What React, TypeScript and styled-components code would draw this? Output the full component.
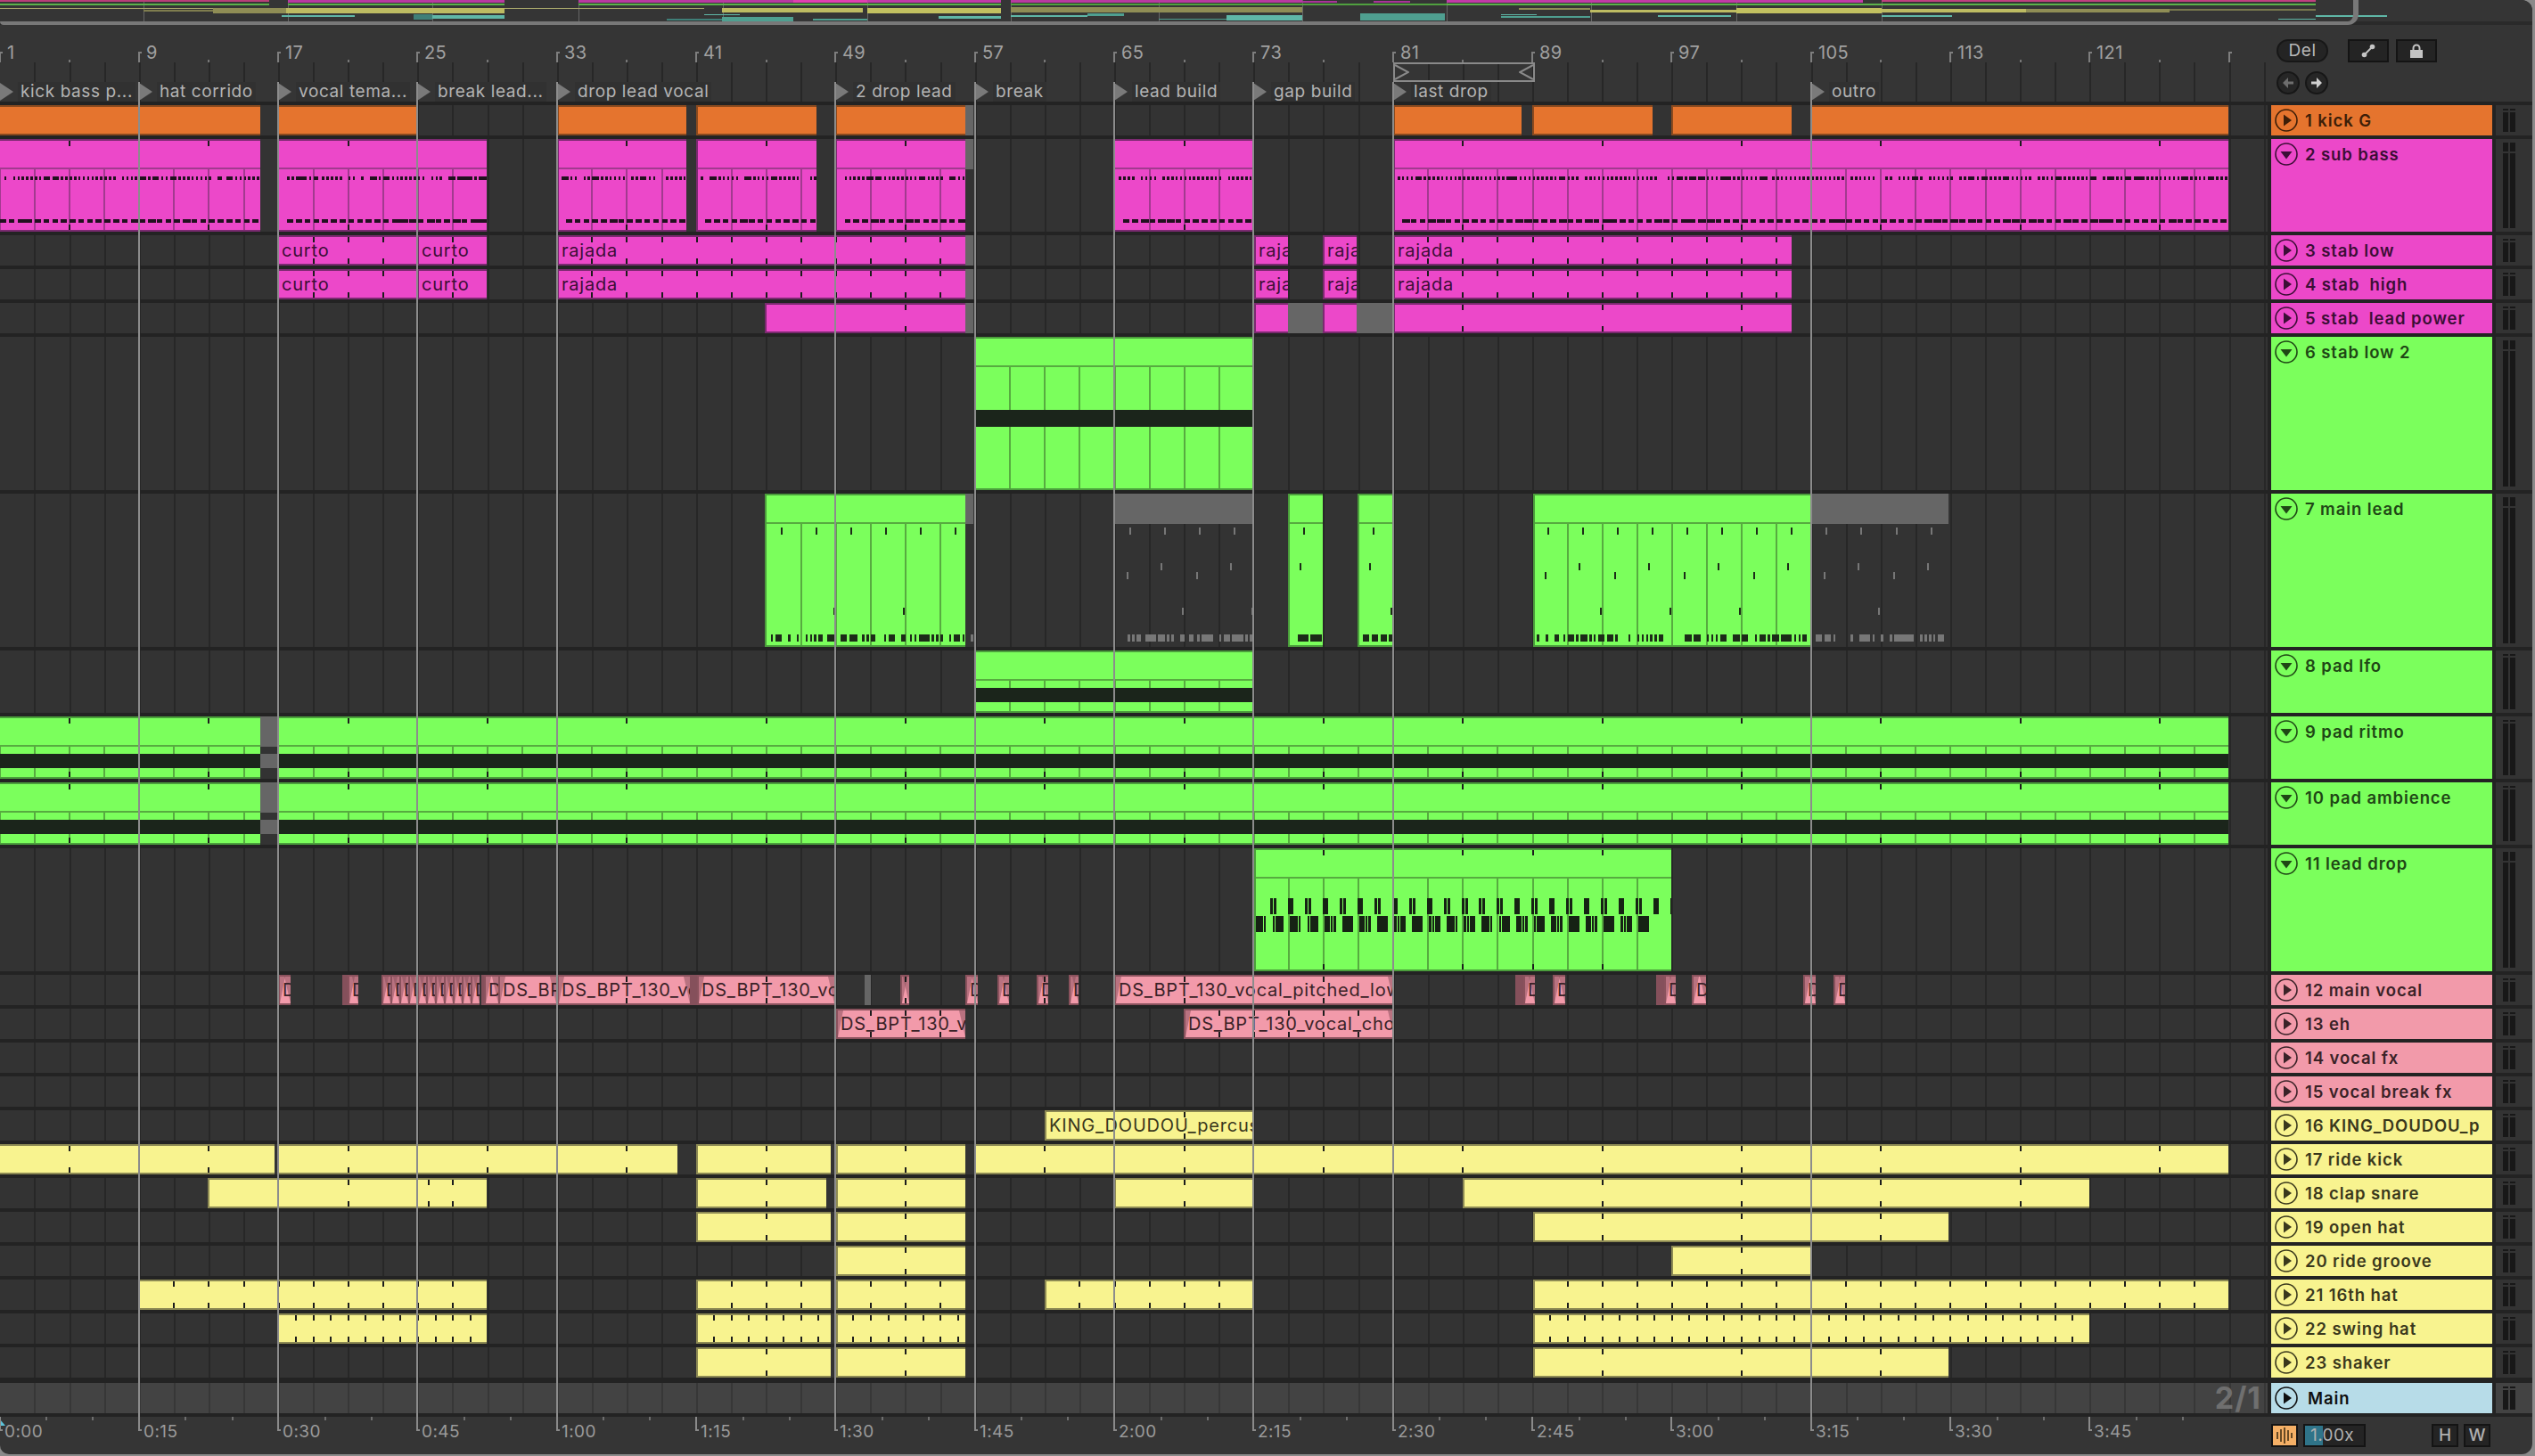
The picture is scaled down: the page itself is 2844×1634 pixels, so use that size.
import React from 'react';
import styled, { createGlobalStyle } from 'styled-components';

type Tone = 'orange' | 'pink' | 'green' | 'salmon' | 'salmonDim' | 'yellow' | 'blue' | 'off';
type ClipKind = 'plain' | 'strip' | 'ghost';

const TONES: Record<Tone, { fill: string; edge: string; line: string; ink: string }> = {
    orange: { fill: '#e5742e', edge: '#8a4a1f', line: '#a8561f', ink: '#3d1e08' },
    pink: { fill: '#ec48c9', edge: '#7b2a70', line: '#a23a8f', ink: '#3c0e36' },
    green: { fill: '#7bff5c', edge: '#4b9e3c', line: '#57ab40', ink: '#1f4715' },
    salmon: { fill: '#f29aaa', edge: '#8a525d', line: '#8a525d', ink: '#3a2227' },
    salmonDim: { fill: '#85505b', edge: '#85505b', line: '#85505b', ink: '#3a2227' },
    yellow: { fill: '#f8f38f', edge: '#8d8a54', line: '#8d8a54', ink: '#3a381c' },
    blue: { fill: '#b7dce8', edge: '#b7dce8', line: '#b7dce8', ink: '#101010' },
    off: { fill: '#666666', edge: '#666666', line: '#666666', ink: '#222222' },
};

const BAR = 19.54;
const barX = (b: number) => -1 + (b - 1) * BAR;
const lineX = (b: number) => Math.round(barX(b) - 0.5);
const rnd = (i: number) => {
    const v = Math.sin(i * 12.9898) * 43758.5453;
    return v - Math.floor(v);
};

const gridBackground = (base: string, line: string) => {
    const stops: string[] = [];
    let last = 0;
    for (let k = 1; k <= 65; k++) {
        const x = Math.round(-0.6 + 39.08 * k);
        stops.push(`${base} ${last}px ${x}px`, `${line} ${x}px ${x + 2}px`);
        last = x + 2;
    }
    stops.push(`${base} ${last}px 100%`);
    return `linear-gradient(to right, ${stops.join(', ')})`;
};

const LANE_GRID = gridBackground('#333333', '#272727');
const MAIN_GRID = gridBackground('#434343', '#373737');
const RULER_GRID = gridBackground('#353535', '#272727');

interface ClipData {
    from: number;
    to: number;
    label?: string;
    tone?: Tone;
    marks?: number[];
}

interface TrackData {
    name: string;
    tone: Tone;
    height: number;
    open?: boolean;
    kind?: ClipKind;
    band?: [number, number];
    notes?: 'sub' | 'lead' | 'drop';
    tick?: [number, number];
    fade?: boolean;
    clips: ClipData[];
}

const thinVocals: ClipData[] = Array.from({ length: 11 }, (_, i) => ({ from: 428 + i * 10, to: 438 + i * 10, label: 'D' }));

const spans = (list: number[][]): ClipData[] => list.map(([from, to]) => ({ from, to }));
const named = (label: string, list: number[][]): ClipData[] => list.map(([from, to]) => ({ from, to, label }));
const gap57 = { from: 1083, to: 1092, tone: 'off' as Tone };

const TRACKS: TrackData[] = [
    { name: '1 kick G', tone: 'orange', height: 34, clips: [...spans([[-4, 292], [311, 468], [625, 770], [781, 916], [937, 1083], [1563, 1707], [1719, 1854], [1875, 2010], [2031, 2500]]), gap57] },
    { name: '2 sub bass', tone: 'pink', height: 104, open: true, kind: 'strip', notes: 'sub', tick: [5, 8], clips: [...spans([[-4, 292], [311, 546], [625, 770], [781, 916], [937, 1083], [1249, 1407], [1563, 2500]]), gap57] },
    { name: '3 stab low', tone: 'pink', height: 34, tick: [1, 2], clips: [...named('curto', [[311, 468], [468, 546]]), ...named('rajada', [[625, 1083]]), ...named('raja', [[1407, 1445], [1484, 1522]]), ...named('rajada', [[1563, 2010]]), gap57] },
    { name: '4 stab  high', tone: 'pink', height: 34, tick: [1, 2], clips: [...named('curto', [[311, 468], [468, 546]]), ...named('rajada', [[625, 1083]]), ...named('raja', [[1407, 1445], [1484, 1522]]), ...named('rajada', [[1563, 2010]]), gap57] },
    { name: '5 stab  lead power', tone: 'pink', height: 34, tick: [5, 8], clips: [...spans([[858, 1083], [1407, 1445], [1484, 1522], [1563, 2010]]), gap57, { from: 1445, to: 1484, tone: 'off' }, { from: 1522, to: 1563, tone: 'off' }] },
    { name: '6 stab low 2', tone: 'green', height: 172, open: true, kind: 'strip', band: [82, 101], clips: spans([[1093, 1407]]) },
    { name: '7 main lead', tone: 'green', height: 172, open: true, kind: 'strip', notes: 'lead', clips: [...spans([[858, 1083], [1445, 1484], [1523, 1563], [1720, 2031]]), { from: 1083, to: 1092, tone: 'off' }, { from: 1250, to: 1407, tone: 'off' }, { from: 2031, to: 2186, tone: 'off' }] },
    { name: '8 pad lfo', tone: 'green', height: 70, open: true, kind: 'strip', band: [42, 58], clips: spans([[1093, 1407]]) },
    { name: '9 pad ritmo', tone: 'green', height: 70, open: true, kind: 'strip', band: [42, 58], tick: [5, 8], clips: [...spans([[-4, 292], [311, 2500]]), { from: 292, to: 311, tone: 'off' }] },
    { name: '10 pad ambience', tone: 'green', height: 70, open: true, kind: 'strip', band: [42, 58], tick: [5, 8], clips: [...spans([[-4, 292], [311, 2500]]), { from: 292, to: 311, tone: 'off' }] },
    { name: '11 lead drop', tone: 'green', height: 138, open: true, kind: 'strip', notes: 'drop', tick: [1, 4], clips: spans([[1407, 1875]]) },
    {
        name: '12 main vocal', tone: 'salmon', height: 34, fade: true, tick: [5, 8], clips: [
            { from: 312, to: 326, label: 'D' },
            { from: 384, to: 390, tone: 'salmonDim' }, { from: 390, to: 402, label: 'D' },
            ...thinVocals,
            { from: 540, to: 543, tone: 'salmonDim' }, { from: 543, to: 559, label: 'D' },
            { from: 559, to: 624, label: 'DS_BPT_130_vocal' }, { from: 625, to: 774, label: 'DS_BPT_130_vocal' },
            { from: 774, to: 782, tone: 'salmonDim' }, { from: 782, to: 936, label: 'DS_BPT_130_vocal' },
            { from: 970, to: 977, tone: 'off' }, { from: 1010, to: 1020 },
            { from: 1083, to: 1097, label: 'D' }, { from: 1119, to: 1132, label: 'D' }, { from: 1163, to: 1176, label: 'D' }, { from: 1199, to: 1210, label: 'D' },
            { from: 1250, to: 1564, label: 'DS_BPT_130_vocal_pitched_low' },
            { from: 1700, to: 1709, tone: 'salmonDim' }, { from: 1709, to: 1722, label: 'D' },
            { from: 1742, to: 1756, label: 'D' },
            { from: 1858, to: 1867, tone: 'salmonDim' }, { from: 1867, to: 1880, label: 'D' },
            { from: 1898, to: 1914, label: 'D' }, { from: 2023, to: 2037, label: 'D' }, { from: 2057, to: 2070, label: 'D' },
        ],
    },
    { name: '13 eh', tone: 'salmon', height: 34, fade: true, tick: [1, 2], clips: [{ from: 938, to: 1083, label: 'DS_BPT_130_vocal' }, { from: 1328, to: 1564, label: 'DS_BPT_130_vocal_chop' }] },
    { name: '14 vocal fx', tone: 'salmon', height: 34, clips: [] },
    { name: '15 vocal break fx', tone: 'salmon', height: 34, clips: [] },
    { name: '16 KING_DOUDOU_p', tone: 'yellow', height: 34, tick: [5, 8], clips: [{ from: 1172, to: 1407, label: 'KING_DOUDOU_percussion' }] },
    { name: '17 ride kick', tone: 'yellow', height: 34, tick: [5, 8], clips: spans([[-4, 308], [311, 760], [781, 932], [938, 1083], [1093, 2500]]) },
    { name: '18 clap snare', tone: 'yellow', height: 34, tick: [5, 8], clips: [{ from: 233, to: 546, marks: [480, 507] }, ...spans([[781, 927], [938, 1083], [1250, 1407], [1641, 2344]])] },
    { name: '19 open hat', tone: 'yellow', height: 34, tick: [5, 8], clips: spans([[781, 932], [938, 1083], [1720, 2186]]) },
    { name: '20 ride groove', tone: 'yellow', height: 34, tick: [5, 8], clips: spans([[938, 1083], [1875, 2031]]) },
    { name: '21 16th hat', tone: 'yellow', height: 34, tick: [1, 2], clips: spans([[155, 546], [781, 932], [938, 1083], [1172, 1407], [1720, 2500]]) },
    { name: '22 swing hat', tone: 'yellow', height: 34, tick: [1, 1], clips: spans([[311, 546], [781, 932], [938, 1083], [1720, 2344]]) },
    { name: '23 shaker', tone: 'yellow', height: 34, tick: [5, 8], clips: spans([[781, 932], [938, 1083], [1720, 2186]]) },
];

const LOCATORS: [number, string][] = [
    [1, 'kick bass p...'], [9, 'hat corrido'], [17, 'vocal tema...'], [25, 'break lead...'], [33, 'drop lead vocal'],
    [49, '2 drop lead'], [57, 'break'], [65, 'lead build'], [73, 'gap build'], [81, 'last drop'], [105, 'outro'],
];

const OVERVIEW: [number, number, number, number, string][] = [
    [0, 302, 0, 2, '#b83f78'], [0, 302, 4, 6, '#5bb24a'], [0, 790, 9, 10, '#a9a76b'],
    [161, 323, 11, 13, '#7f7d4f'], [239, 323, 9, 15, '#8f8d55'], [321, 566, 9, 15, '#bdbb62'],
    [316, 398, 17, 19, '#5fb7a7'], [464, 485, 16, 22, '#3f7f78'], [485, 566, 17, 21, '#5fb7a7'],
    [323, 566, 0, 3, '#b83aa0'], [323, 566, 4, 6, '#5bb24a'],
    [649, 890, 0, 3, '#b83aa0'], [890, 973, 0, 3, '#e040b0'], [973, 1123, 0, 3, '#c13ba6'],
    [649, 1123, 4, 6, '#5bb24a'], [810, 968, 9, 14, '#bdbb62'], [973, 1123, 9, 15, '#c2c060'],
    [790, 830, 16, 17, '#5fb7a7'], [748, 810, 21, 23, '#3f7f78'], [810, 890, 19, 24, '#4f9f90'], [912, 973, 21, 23, '#4f9f90'],
    [1053, 1123, 18, 21, '#5fb7a7'], [1134, 1461, 0, 3, '#b83aa0'], [1134, 1623, 4, 6, '#4fa03f'],
    [1134, 1461, 8, 14, '#8f8d55'], [1134, 1220, 17, 19, '#5fb7a7'], [1220, 1261, 15, 18, '#4f9f90'],
    [1376, 1461, 17, 23, '#5fb7a7'], [1300, 1376, 21, 22, '#4f9f90'], [1461, 1500, 1, 3, '#a93399'], [1541, 1582, 1, 3, '#a93399'],
    [1526, 1621, 15, 23, '#4f9f90'], [1623, 2090, 0, 3, '#c13ba6'], [2111, 2598, 0, 2, '#c04080'], [1623, 2598, 4, 6, '#5bb24a'],
    [1704, 1784, 9, 11, '#8f8d55'], [1784, 1948, 11, 14, '#bdbb62'], [1948, 2111, 9, 15, '#c2c060'], [2111, 2273, 10, 14, '#bdbb62'],
    [2273, 2434, 10, 14, '#8f8d55'], [2434, 2598, 10, 12, '#77764d'],
    [1684, 1724, 16, 17, '#5fb7a7'], [1684, 1784, 18, 20, '#4f9f90'], [1860, 1942, 17, 19, '#5fb7a7'], [2111, 2190, 17, 19, '#5fb7a7'],
    [2598, 2678, 17, 19, '#5fb7a7'], [2556, 2598, 21, 22, '#5fb7a7'],
];

const GlobalStyle = createGlobalStyle`
    html, body {
        margin: 0;
        background: #8a8a8a;
        overflow: hidden;
    }
    * {
        box-sizing: border-box;
    }
`;

const Page = styled.div`
    width: 2844px;
    height: 1634px;
    padding: 0 3px 2px 0;
    background: #8a8a8a;
    font-family: Inter, "Liberation Sans", sans-serif;
`;

const Panel = styled.div`
    position: relative;
    width: 100%;
    height: 100%;
    display: flex;
    flex-direction: column;
    background: #353535;
    border-radius: 0 12px 12px 10px;
    overflow: hidden;
`;

const Overview = styled.div`
    position: relative;
    height: 28px;
    flex: none;
    background: #353535;
    border-bottom: 4px solid #2a2a2a;
`;

const OverviewStrip = styled.svg`
    display: block;
`;

const OverviewThumb = styled.div`
    position: absolute;
    left: 0;
    top: -12px;
    width: 2646px;
    height: 40px;
    border: solid #787878;
    border-width: 0 6px 4px 0;
    border-radius: 0 0 12px 4px;
`;

const TopBar = styled.div`
    display: grid;
    grid-template-columns: 2544px 1fr;
    height: 86px;
    flex: none;
`;

const Ruler = styled.div`
    display: flex;
    flex-direction: column;
    overflow: hidden;
`;

const BarRow = styled.div`
    position: relative;
    height: 42px;
    flex: none;
`;

const BarMark = styled.div.attrs<{ $left: number }>(p => ({ style: { left: p.$left } }))`
    position: absolute;
    bottom: 0;
    height: 12px;
    width: 4px;
    border-left: 2px solid #7e7e7e;
    border-top: 2px solid #7e7e7e;
`;

const BarNumber = styled.span.attrs<{ $left: number }>(p => ({ style: { left: p.$left } }))`
    position: absolute;
    top: 20px;
    font-size: 20px;
    line-height: 22px;
    letter-spacing: 0.4px;
    color: #a0a0a0;
`;

const BeatDot = styled.div.attrs<{ $left: number }>(p => ({ style: { left: p.$left } }))`
    position: absolute;
    bottom: 0;
    width: 2px;
    height: 3px;
    background: #777;
`;

const BeatRow = styled.div`
    height: 22px;
    flex: none;
    background: ${RULER_GRID};
`;

const LocatorRow = styled.div`
    position: relative;
    height: 22px;
    flex: none;
    background: ${RULER_GRID};
`;

const Locator = styled.div.attrs<{ $left: number }>(p => ({ style: { left: p.$left } }))`
    position: absolute;
    top: 0;
    height: 22px;
    display: flex;
    align-items: center;
    gap: 5px;
`;

const LocatorFlag = styled.span`
    flex: none;
    width: 0;
    height: 0;
    margin-left: 1px;
    border-top: 10px solid transparent;
    border-bottom: 10px solid transparent;
    border-left: 15px solid #7a7a7a;
`;

const LocatorName = styled.span`
    font-size: 19px;
    line-height: 22px;
    padding: 0 3px;
    letter-spacing: 0.6px;
    color: #b4b4b4;
    background: #313131;
    white-space: nowrap;
`;

const LoopBrace = styled.div`
    position: absolute;
    left: 1563px;
    top: 70px;
    width: 159px;
    height: 22px;
    border: 2px solid #8a8a8a;
    display: flex;
    align-items: center;
    justify-content: space-between;
`;

const BraceArrow = styled.svg`
    display: block;
`;

const TopControls = styled.div`
    display: grid;
    grid-template-columns: 58px 46px 46px;
    grid-auto-rows: 26px;
    column-gap: 8px;
    row-gap: 10px;
    padding: 16px 0 0 10px;
`;

const DelPill = styled.div`
    height: 26px;
    border-radius: 13px;
    border: 2px solid #171717;
    background: #242424;
    color: #b8b8b8;
    font-size: 19px;
    letter-spacing: 0.6px;
    line-height: 22px;
    text-align: center;
`;

const SquareButton = styled.div`
    height: 26px;
    margin-left: 14px;
    margin-right: -14px;
    display: flex;
    align-items: center;
    justify-content: center;
    background: #242424;
    border: 2px solid #141414;
`;

const NavPair = styled.div`
    display: flex;
    gap: 6px;
    grid-column: 1;
`;

const RoundButton = styled.div`
    width: 26px;
    height: 26px;
    display: flex;
    align-items: center;
    justify-content: center;
    border-radius: 50%;
    border: 2px solid #171717;
    background: #262626;
`;

const TrackList = styled.div`
    flex: none;
    height: 1476px;
    display: flex;
    flex-direction: column;
    gap: 4px;
    padding: 4px 0;
    background: #232323;
`;

const TrackRow = styled.div<{ $height: number; $main?: boolean }>`
    display: grid;
    grid-template-columns: 2544px 248px 1fr;
    column-gap: 4px;
    height: ${p => p.$height}px;
    flex: none;
    margin-top: ${p => (p.$main ? '2px' : '0')};
`;

const Lane = styled.div<{ $main?: boolean }>`
    position: relative;
    background: ${p => (p.$main ? MAIN_GRID : LANE_GRID)};
    overflow: hidden;
`;

const Clip = styled.div.attrs<{ $left: number; $width: number }>(p => ({ style: { left: p.$left, width: p.$width } }))<{ $tone: Tone; $ghost?: boolean }>`
    position: absolute;
    top: 0;
    bottom: 0;
    overflow: hidden;
    background: ${p => (p.$ghost ? 'transparent' : TONES[p.$tone].fill)};
    border: solid ${p => (p.$ghost ? 'transparent' : TONES[p.$tone].edge)};
    border-width: ${p => (p.$ghost ? '0' : '2px 0 2px 2px')};
`;

const ClipArt = styled.svg`
    position: absolute;
    left: -2px;
    top: -2px;
    display: block;
`;

const GhostArt = styled(ClipArt)`
    left: 0;
    top: 0;
`;

const ClipLabel = styled.span<{ $tone: Tone }>`
    position: relative;
    display: block;
    padding-left: 3px;
    font-size: 20px;
    letter-spacing: 0.8px;
    line-height: 30px;
    white-space: nowrap;
    color: ${p => TONES[p.$tone].ink};
`;

const TrackHead = styled.div<{ $tone: Tone; $main?: boolean }>`
    display: flex;
    align-items: flex-start;
    gap: ${p => (p.$main ? '11px' : '8px')};
    padding: 4px 0 0 4px;
    overflow: hidden;
    background: ${p => TONES[p.$tone].fill};
    color: ${p => TONES[p.$tone].ink};
    font-size: 18.5px;
    letter-spacing: 0.9px;
    font-weight: 600;
    line-height: 26px;
    white-space: pre;
`;

const HeadIcon = styled.svg`
    flex: none;
    display: block;
`;

const Mixer = styled.div<{ $main?: boolean }>`
    display: flex;
    gap: 2px;
    padding: 4px 0 4px 8px;
    background: ${p => (p.$main ? '#434343' : '#333333')};
`;

const MeterChannel = styled.div<{ $tall: boolean }>`
    width: 6px;
    display: flex;
    flex-direction: column;
    gap: 2px;
    &::before {
        content: '';
        height: ${p => (p.$tall ? '10px' : '2px')};
        flex: none;
        background: #181818;
    }
    &::after {
        content: '';
        flex: 1;
        background: #181818;
    }
`;

const SignatureBadge = styled.span`
    position: absolute;
    right: 7px;
    top: 0;
    font-size: 34px;
    font-weight: 700;
    letter-spacing: 1px;
    line-height: 34px;
    color: #6f6f6f;
`;

const BottomBar = styled.div`
    flex: 1;
    display: grid;
    grid-template-columns: 2544px 1fr;
    column-gap: 4px;
`;

const TimeRuler = styled.div`
    position: relative;
    overflow: hidden;
`;

const TimeTick = styled.div.attrs<{ $left: number }>(p => ({ style: { left: p.$left } }))`
    position: absolute;
    top: 0;
    width: 4px;
    height: 16px;
    border-left: 2px solid #8a8a8a;
    border-bottom: 2px solid #8a8a8a;
`;

const TimeDot = styled.div.attrs<{ $left: number }>(p => ({ style: { left: p.$left } }))`
    position: absolute;
    top: 0;
    width: 2px;
    height: 4px;
    background: #6e6e6e;
`;

const TimeLabel = styled.span.attrs<{ $left: number }>(p => ({ style: { left: p.$left } }))`
    position: absolute;
    top: 6px;
    font-size: 19px;
    letter-spacing: 0.4px;
    line-height: 22px;
    color: #9a9a9a;
`;

const Playhead = styled.div`
    position: absolute;
    left: 0;
    top: 3px;
    width: 0;
    height: 0;
    border-bottom: 7px solid #5cc4dc;
    border-right: 6px solid transparent;
`;

const BottomControls = styled.div`
    display: flex;
    align-items: flex-start;
    padding-top: 8px;
`;

const MonitorButton = styled.div`
    width: 30px;
    height: 26px;
    display: flex;
    align-items: center;
    justify-content: center;
    background: #f5b066;
    border: 2px solid #141414;
`;

const SpeedBox = styled.div`
    position: relative;
    width: 70px;
    height: 26px;
    margin-left: 6px;
    background: #242424;
    border: 2px solid #141414;
    color: #b0b0b0;
    font-size: 19px;
    letter-spacing: 0.4px;
    line-height: 22px;
    padding-left: 6px;
    &::before {
        content: '';
        position: absolute;
        left: 0;
        top: 0;
        bottom: 0;
        width: 20px;
        background: #2f7489;
    }
`;

const SpeedText = styled.span`
    position: relative;
`;

const LetterButton = styled.div<{ $gap: number }>`
    width: 30px;
    height: 26px;
    margin-left: ${p => p.$gap}px;
    text-align: center;
    background: #242424;
    border: 2px solid #141414;
    color: #b0b0b0;
    font-size: 19px;
    font-weight: 500;
    line-height: 22px;
`;

const LocatorLine = styled.div.attrs<{ $left: number }>(p => ({ style: { left: p.$left } }))`
    position: absolute;
    top: 92px;
    height: 1498px;
    width: 2px;
    background: #8c8c8c;
`;

function Meter({ tall }: { tall: boolean }) {
    return <Mixer>
        <MeterChannel $tall={tall}></MeterChannel>
        <MeterChannel $tall={tall}></MeterChannel>
    </Mixer>
}

function ticksFor(left: number, width: number, tick?: [number, number], marks?: number[]) {
    const out: number[] = (marks || []).map(x => x - left);
    if (!tick) return out;
    for (let b = tick[0]; b < 140; b += tick[1]) {
        const x = Math.round(barX(b) - left);
        if (x > 4 && x < width - 4) out.push(x);
    }
    return out;
}

function subNotes(left: number, width: number) {
    const rects: React.ReactNode[] = [];
    for (let i = Math.floor(left / 4.885); i * 4.885 < left + width; i++) {
        const x = i * 4.885 - left;
        if (x < 3 || rnd(i) < 0.12) continue;
        rects.push(<rect key={`s${i}`} x={x} y={42} width={rnd(i * 3) > 0.85 ? 5 : 2.5} height={4} fill="#22101f" />);
    }
    for (let i = Math.floor(left / 9.77); i * 9.77 < left + width; i++) {
        const x = i * 9.77 - left;
        if (x < 3) continue;
        rects.push(<rect key={`b${i}`} x={x} y={90} width={rnd(i * 7) > 0.75 ? 9 : 6.5} height={4} fill="#22101f" />);
    }
    return rects;
}

function leadNotes(left: number, width: number, color: string) {
    const rects: React.ReactNode[] = [];
    const layer = (start: number, step: number, y: number, name: string, minX: number) => {
        for (let k = -30; k < 40; k++) {
            const at = start + step * k;
            const x = at - left;
            if (at >= minX && x > 1 && x < width - 2) {
                rects.push(<rect key={`${name}${k}`} x={x} y={y} width={2} height={8} fill={color} />);
            }
        }
    };
    layer(876, 39.08, 38, 'a', 0);
    layer(1302, 78.16, 78, 'b', 1250);
    layer(1264, 78.16, 88, 'c', 1250);
    layer(935, 78.16, 128, 'd', 0);
    for (let i = Math.floor(left / 4.885); i * 4.885 < left + width; i++) {
        const x = i * 4.885 - left;
        if (x < 2 || rnd(i + 9) < 0.28) continue;
        rects.push(<rect key={`e${i}`} x={x} y={158} width={rnd(i * 5) > 0.55 ? 5 : 2.5} height={8} fill={color} />);
    }
    return rects;
}

function dropNotes(width: number) {
    const rects: React.ReactNode[] = [];
    const color = '#162214';
    for (let k = 0; k < 24; k++) {
        const x = k * 19.54 + 18;
        if (x < width) {
            rects.push(<rect key={`u${k}`} x={x} y={56} width={3} height={18} fill={color} />);
            rects.push(<rect key={`v${k}`} x={x + 3.6} y={56} width={3} height={18} fill={color} />);
        }
        const z = k * 19.54 + 1;
        if (z < width - 20) {
            [0, 3.2, 6.4, 9.6].forEach((d, j) => {
                rects.push(<rect key={`w${k}-${j}`} x={z + d} y={76} width={2.8} height={18} fill={color} />);
            });
        }
    }
    return rects;
}

function TrackClip({ track, clip }: { track: TrackData; clip: ClipData }) {
    const tone = clip.tone || track.tone;
    const width = clip.to - clip.from;
    const h = track.height;
    const off = tone === 'off';
    const strip = track.kind === 'strip';
    const palette = TONES[tone];
    const ticks = off ? [] : ticksFor(clip.from, width, track.tick, clip.marks);

    if (off && strip) {
        return <Clip $left={clip.from} $width={width} $tone="off" $ghost>
            <GhostArt width={width} height={h} shapeRendering="crispEdges">
                <rect x={0} y={0} width={width} height={34} fill="#666666" />
                {track.band && <rect x={0} y={track.band[0]} width={width} height={track.band[1] - track.band[0]} fill="#666666" />}
                {track.notes === 'lead' && leadNotes(clip.from, width, '#777777')}
            </GhostArt>
        </Clip>
    }

    const lines: number[] = [];
    if (strip) {
        for (let k = 0; k < 70; k++) {
            const x = Math.round(39.08 * k - 1 - clip.from);
            if (x > 2 && x < width - 2) lines.push(x);
        }
    }
    const fade = track.fade && !off && tone === 'salmon';

    return <Clip $left={clip.from} $width={width} $tone={tone}>
        <ClipArt width={width} height={h} shapeRendering={fade ? 'auto' : 'crispEdges'}>
            {strip && <rect x={0} y={32} width={width} height={2} fill={palette.line} />}
            {lines.map(x => <rect key={x} x={x} y={34} width={2} height={h - 34} fill={palette.line} />)}
            {track.band && <rect x={0} y={track.band[0]} width={width} height={track.band[1] - track.band[0]} fill="#1b251b" />}
            {track.notes === 'sub' && subNotes(clip.from, width)}
            {track.notes === 'lead' && leadNotes(clip.from, width, '#1c2b18')}
            {track.notes === 'drop' && dropNotes(width)}
            {fade && <polygon points={`2,2 8,2 2,${h - 2}`} fill={palette.edge} opacity={0.55} />}
            {fade && <polygon points={`${width - 7},2 ${width},2 ${width},${h - 2}`} fill={palette.edge} opacity={0.55} />}
            {ticks.map(x => <rect key={`t${x}`} x={x} y={2} width={2} height={6} fill="#1c1c1c" />)}
            {ticks.map(x => <rect key={`d${x}`} x={x} y={h - 8} width={2} height={6} fill="#1c1c1c" />)}
        </ClipArt>
        {clip.label && <ClipLabel $tone={tone}>{clip.label}</ClipLabel>}
    </Clip>
}

function FoldIcon({ open, color }: { open?: boolean; color: string }) {
    return <HeadIcon width="26" height="26" viewBox="0 0 26 26">
        <circle cx="13" cy="13" r="12" fill="none" stroke={color} strokeWidth="1.6" />
        {open
            ? <polygon points="6.5,10 19.5,10 13,18.5" fill={color} />
            : <polygon points="10,6.5 10,19.5 19,13" fill={color} />}
    </HeadIcon>
}

function TrackLine({ track }: { track: TrackData }) {
    return <TrackRow $height={track.height}>
        <Lane>
            {track.clips.map(clip => <TrackClip key={`${clip.from}-${clip.to}`} track={track} clip={clip}></TrackClip>)}
        </Lane>
        <TrackHead $tone={track.tone}>
            <FoldIcon open={track.open} color={TONES[track.tone].ink}></FoldIcon>
            {track.name}
        </TrackHead>
        <Meter tall={track.height > 90}></Meter>
    </TrackRow>
}

const eighths = Array.from({ length: 17 }, (_, i) => 1 + i * 8);
const seconds = Array.from({ length: 16 }, (_, i) => i);
const formatTime = (i: number) => `${Math.floor(i / 4)}:${String((i % 4) * 15).padStart(2, '0')}`;

export default function App() {
    return <Page>
        <GlobalStyle></GlobalStyle>
        <Panel>
            <Overview>
                <OverviewStrip width="2841" height="24" shapeRendering="crispEdges">
                    {[161, 323, 485, 649, 811, 973, 1134, 1300, 1461, 1623, 1785, 1948, 2111].map(x => <rect key={x} x={x} y={0} width={1} height={24} fill="#666" />)}
                    {OVERVIEW.map(([a, b, y0, y1, fill], i) => <rect key={i} x={a} y={y0} width={b - a} height={y1 - y0} fill={fill} />)}
                </OverviewStrip>
                <OverviewThumb></OverviewThumb>
            </Overview>
            <TopBar>
                <Ruler>
                    <BarRow>
                        {eighths.map(b => <BarMark key={b} $left={lineX(b)}></BarMark>)}
                        {eighths.slice(0, 16).map(b => <BarNumber key={b} $left={lineX(b) + 9}>{b}</BarNumber>)}
                        {eighths.map(b => <BeatDot key={b} $left={Math.round(barX(b + 4))}></BeatDot>)}
                    </BarRow>
                    <BeatRow></BeatRow>
                    <LocatorRow>
                        {LOCATORS.map(([b, name]) => <Locator key={b} $left={lineX(b)}>
                            <LocatorFlag></LocatorFlag>
                            <LocatorName>{name}</LocatorName>
                        </Locator>)}
                    </LocatorRow>
                </Ruler>
                <TopControls>
                    <DelPill>Del</DelPill>
                    <SquareButton>
                        <svg width="16" height="16" viewBox="0 0 16 16">
                            <line x1="3.5" y1="12.5" x2="12.5" y2="3.5" stroke="#c4c4c4" strokeWidth="2" />
                            <circle cx="3.5" cy="12.5" r="2.8" fill="#c4c4c4" />
                            <circle cx="12.5" cy="3.5" r="2.8" fill="#c4c4c4" />
                        </svg>
                    </SquareButton>
                    <SquareButton>
                        <svg width="16" height="16" viewBox="0 0 16 16">
                            <path d="M4.5 7V5a3.5 3.5 0 0 1 7 0v2" fill="none" stroke="#c4c4c4" strokeWidth="2" />
                            <rect x="1" y="7" width="14" height="9" fill="#c4c4c4" />
                        </svg>
                    </SquareButton>
                    <NavPair>
                        <RoundButton>
                            <svg width="14" height="14" viewBox="0 0 14 14">
                                <path d="M7 1 1 7l6 6V8.5h6v-3H7z" fill="#6e6e6e" />
                            </svg>
                        </RoundButton>
                        <RoundButton>
                            <svg width="14" height="14" viewBox="0 0 14 14">
                                <path d="M7 1l6 6-6 6V8.5H1v-3h6z" fill="#d0d0d0" />
                            </svg>
                        </RoundButton>
                    </NavPair>
                </TopControls>
            </TopBar>
            <TrackList>
                {TRACKS.map(track => <TrackLine key={track.name} track={track}></TrackLine>)}
                <TrackRow $height={34} $main>
                    <Lane $main>
                        <SignatureBadge>2/1</SignatureBadge>
                    </Lane>
                    <TrackHead $tone="blue" $main>
                        <FoldIcon color="#101010"></FoldIcon>
                        Main
                    </TrackHead>
                    <Mixer $main>
                        <MeterChannel $tall={false}></MeterChannel>
                        <MeterChannel $tall={false}></MeterChannel>
                    </Mixer>
                </TrackRow>
            </TrackList>
            <BottomBar>
                <TimeRuler>
                    <Playhead></Playhead>
                    {seconds.map(i => <TimeTick key={i} $left={lineX(1 + i * 8)}></TimeTick>)}
                    {seconds.flatMap(i => [1, 2].map(j => <TimeDot key={`${i}-${j}`} $left={Math.round(barX(1 + i * 8) + j * 52.1)}></TimeDot>))}
                    {seconds.map(i => <TimeLabel key={i} $left={lineX(1 + i * 8) + 6}>{formatTime(i)}</TimeLabel>)}
                </TimeRuler>
                <BottomControls>
                    <MonitorButton>
                        <svg width="20" height="18" viewBox="0 0 20 18">
                            {[[2, 5, 8], [6, 2, 14], [10, 0, 18], [14, 3, 12], [18, 6, 6]].map(([x, y, h]) => <rect key={x} x={x - 0.75} y={y} width="1.5" height={h} fill="#3a2a10" />)}
                        </svg>
                    </MonitorButton>
                    <SpeedBox><SpeedText>1.00x</SpeedText></SpeedBox>
                    <LetterButton $gap={74}>H</LetterButton>
                    <LetterButton $gap={6}>W</LetterButton>
                </BottomControls>
            </BottomBar>
            <LoopBrace>
                <BraceArrow width="16" height="18" viewBox="0 0 16 18">
                    <polyline points="0,1 15,9 0,17" fill="none" stroke="#8a8a8a" strokeWidth="2" />
                </BraceArrow>
                <BraceArrow width="16" height="18" viewBox="0 0 16 18">
                    <polyline points="16,1 1,9 16,17" fill="none" stroke="#8a8a8a" strokeWidth="2" />
                </BraceArrow>
            </LoopBrace>
            {LOCATORS.slice(1).map(([b]) => <LocatorLine key={b} $left={lineX(b)}></LocatorLine>)}
        </Panel>
    </Page>
}
